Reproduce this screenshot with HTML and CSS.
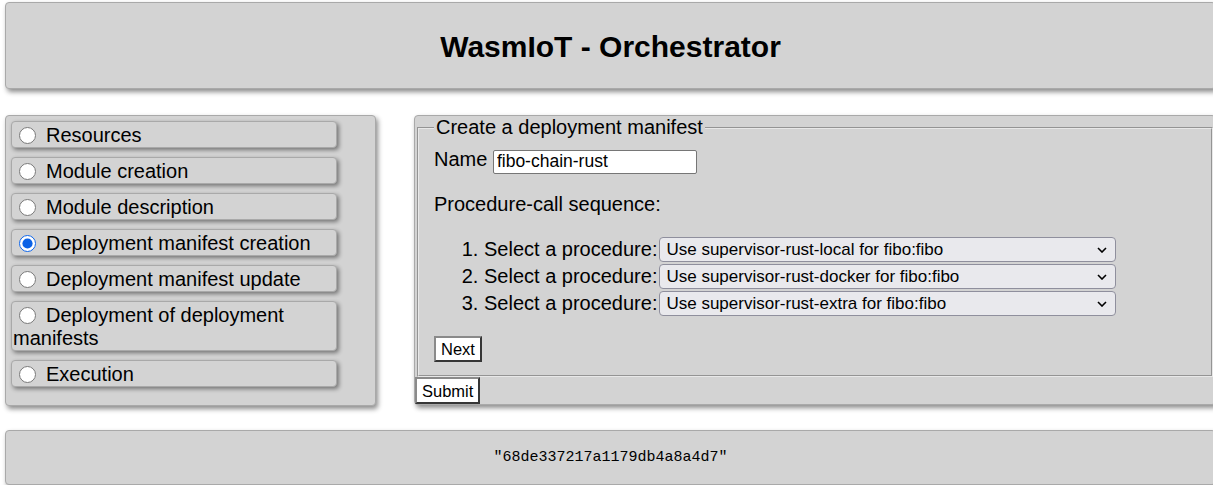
FILE: index.html
```html
<!DOCTYPE html>
<html>
<head>
<meta charset="utf-8">
<link rel="stylesheet" href="styles.css">
</head>
<body>
<header class="header"><h1 class="title">WasmIoT - Orchestrator</h1></header>
<div class="main">
  <nav class="nav">
    <label class="nav-item"><input type="radio" name="page" class="radio">Resources</label>
    <label class="nav-item"><input type="radio" name="page" class="radio">Module creation</label>
    <label class="nav-item"><input type="radio" name="page" class="radio">Module description</label>
    <label class="nav-item"><input type="radio" name="page" class="radio" checked>Deployment manifest creation</label>
    <label class="nav-item"><input type="radio" name="page" class="radio">Deployment manifest update</label>
    <label class="nav-item"><input type="radio" name="page" class="radio">Deployment of deployment manifests</label>
    <label class="nav-item"><input type="radio" name="page" class="radio">Execution</label>
  </nav>
  <form class="panel">
    <fieldset class="fieldset">
      <legend class="legend">Create a deployment manifest</legend>
      <div class="name-row">Name <input class="text-input" type="text" value="fibo-chain-rust"></div>
      <p class="seq-label">Procedure-call sequence:</p>
      <ol class="steps">
        <li class="step">Select a procedure:<span class="select-wrap"><select class="proc"><option>Use supervisor-rust-local for fibo:fibo</option></select><svg class="chev" width="10" height="6" viewBox="0 0 10 6"><path d="M1 1 L5 5 L9 1" fill="none" stroke="#000" stroke-width="1.6"/></svg></span></li>
        <li class="step">Select a procedure:<span class="select-wrap"><select class="proc"><option>Use supervisor-rust-docker for fibo:fibo</option></select><svg class="chev" width="10" height="6" viewBox="0 0 10 6"><path d="M1 1 L5 5 L9 1" fill="none" stroke="#000" stroke-width="1.6"/></svg></span></li>
        <li class="step">Select a procedure:<span class="select-wrap"><select class="proc"><option>Use supervisor-rust-extra for fibo:fibo</option></select><svg class="chev" width="10" height="6" viewBox="0 0 10 6"><path d="M1 1 L5 5 L9 1" fill="none" stroke="#000" stroke-width="1.6"/></svg></span></li>
      </ol>
      <button type="button" class="btn">Next</button>
    </fieldset>
    <button type="button" class="btn btn-submit">Submit</button>
  </form>
</div>
<footer class="footer"><pre class="code">"68de337217a1179db4a8a4d7"</pre></footer>
</body>
</html>
```
FILE: styles.css
```css
html, body {
  margin: 0;
  padding: 0;
  overflow: hidden;
  background: #fff;
}
body {
  font-family: "Liberation Sans", Arial, sans-serif;
  font-size: 20px;
  color: #000;
  width: 1221px;
}
.header {
  box-sizing: border-box;
  margin: 2px 0 0 5px;
  width: 1211px;
  height: 87px;
  background: #d3d3d3;
  border: 1px solid #a9a9a9;
  border-radius: 4px;
  box-shadow: 2px 3px 5px rgba(0,0,0,0.45);
  display: flex;
  align-items: center;
  justify-content: center;
}
.title {
  margin: 2px 0 0 0;
  font-size: 30px;
  font-weight: bold;
}
.main {
  display: flex;
  align-items: flex-start;
  margin: 26px 0 0 5px;
  gap: 38px;
}
.nav {
  box-sizing: border-box;
  width: 371px;
  background: #d3d3d3;
  border: 1px solid #a9a9a9;
  border-radius: 4px;
  box-shadow: 2px 3px 5px rgba(0,0,0,0.45);
  padding: 5px 5px 18px 5px;
  display: flex;
  flex-direction: column;
  gap: 9px;
}
.nav-item {
  box-sizing: border-box;
  width: 326px;
  background: #d3d3d3;
  border: 1px solid #a9a9a9;
  border-radius: 4px;
  box-shadow: 2px 2px 4px rgba(0,0,0,0.45);
  padding: 2px 1px 0 1px;
  line-height: 23px;
  min-height: 27px;
}
.radio {
  width: 17px;
  height: 17px;
  margin: 0 10px 0 6px;
  vertical-align: -2px;
  accent-color: #0b62e6;
}
.panel {
  box-sizing: border-box;
  width: 802px;
  background: #d3d3d3;
  border: 1px solid #a9a9a9;
  border-radius: 4px;
  box-shadow: 2px 3px 5px rgba(0,0,0,0.45);
  margin: 0;
  padding: 0;
}
.fieldset {
  margin: 0 2px;
  padding: 7px 15px 13px 15px;
  border: 2px groove #e8e8e8;
}
.legend {
  padding: 0 2px;
  line-height: 23px;
}
.name-row {
  line-height: 26px;
  height: 26px;
}
.text-input {
  box-sizing: border-box;
  width: 204px;
  height: 24px;
  font-family: "Liberation Sans", Arial, sans-serif;
  font-size: 17.5px;
  padding: 1px 3px;
  border: 1px solid #767676;
  border-radius: 2px;
  background: #fff;
  vertical-align: -1px;
}
.seq-label {
  margin: 21px 0 20px 0;
  line-height: 23px;
}
.steps {
  margin: 20px 0 19px 0;
  padding-left: 50px;
}
.step {
  line-height: 27px;
  height: 27px;
}
.select-wrap {
  position: relative;
  display: inline-block;
  margin-left: 2px;
  vertical-align: 1px;
  line-height: 0;
}
.proc {
  box-sizing: border-box;
  appearance: none;
  -webkit-appearance: none;
  width: 457px;
  height: 25px;
  font-family: "Liberation Sans", Arial, sans-serif;
  font-size: 17px;
  background: #e9e9ed;
  border: 1px solid #8f8f9d;
  border-radius: 4px;
  padding: 0 20px 0 6px;
  color: #000;
  margin: 0;
}
.chev {
  position: absolute;
  right: 9px;
  top: 10px;
  pointer-events: none;
}
.btn {
  box-sizing: border-box;
  font-family: "Liberation Sans", Arial, sans-serif;
  font-size: 16.5px;
  background: #fff;
  border: 2px outset #8a8a8a;
  padding: 0 5px;
  height: 26px;
  line-height: 22px;
  color: #000;
  margin: 0;
  display: block;
}
.btn-submit {
  height: 27px;
}
.footer {
  box-sizing: border-box;
  margin: 24px 0 0 5px;
  width: 1211px;
  height: 55px;
  background: #d3d3d3;
  border: 1px solid #a9a9a9;
  border-radius: 4px;
  box-shadow: 2px 3px 5px rgba(0,0,0,0.45);
  display: flex;
  align-items: center;
  justify-content: center;
}
.code {
  margin: 0;
  font-family: "Liberation Mono", "Courier New", monospace;
  font-size: 15px;
}
```
